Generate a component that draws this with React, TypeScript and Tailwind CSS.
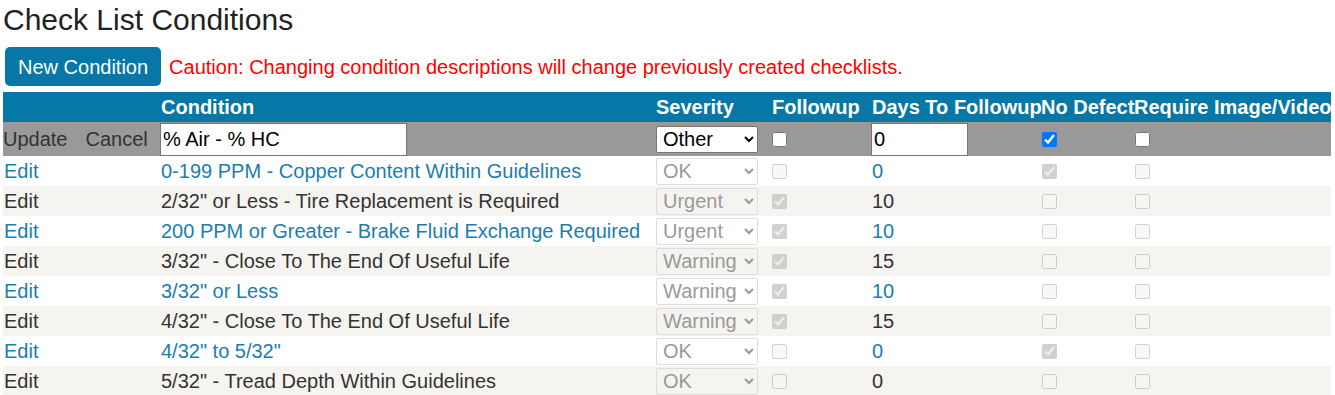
import React from 'react';

type Row = {
  desc: string;
  severity: string;
  followup: boolean;
  days: number;
  noDefect: boolean;
  requireMedia: boolean;
};

const rows: Row[] = [
  { desc: '0-199 PPM - Copper Content Within Guidelines', severity: 'OK', followup: false, days: 0, noDefect: true, requireMedia: false },
  { desc: '2/32" or Less - Tire Replacement is Required', severity: 'Urgent', followup: true, days: 10, noDefect: false, requireMedia: false },
  { desc: '200 PPM or Greater - Brake Fluid Exchange Required', severity: 'Urgent', followup: true, days: 10, noDefect: false, requireMedia: false },
  { desc: '3/32" - Close To The End Of Useful Life', severity: 'Warning', followup: true, days: 15, noDefect: false, requireMedia: false },
  { desc: '3/32" or Less', severity: 'Warning', followup: true, days: 10, noDefect: false, requireMedia: false },
  { desc: '4/32" - Close To The End Of Useful Life', severity: 'Warning', followup: true, days: 15, noDefect: false, requireMedia: false },
  { desc: '4/32" to 5/32"', severity: 'OK', followup: false, days: 0, noDefect: true, requireMedia: false },
  { desc: '5/32" - Tread Depth Within Guidelines', severity: 'OK', followup: false, days: 0, noDefect: false, requireMedia: false },
];

const severities = ['OK', 'Warning', 'Urgent', 'Other'];

const box = 'w-[15px] h-[15px] m-[3px] ml-px mb-[6px] align-middle';

export default function App() {
  return (
    <div className="px-[3px] pt-[3px] text-[20px] text-[#333] font-['Liberation_Sans',Arial,sans-serif]">
      <h2 className="text-[30px] leading-[34px] text-[#222]">Check List Conditions</h2>

      <div className="flex items-center gap-[8px] mt-[10px] pl-[2px]">
        <button className="h-[39px] px-[13px] rounded-[5px] bg-[#0677a6] text-white">New Condition</button>
        <span className="text-[#f00]">Caution: Changing condition descriptions will change previously created checklists.</span>
      </div>

      <table className="mt-[6px] w-[1328px] table-fixed border-collapse">
        <colgroup>
          <col className="w-[157px]" />
          <col className="w-[495px]" />
          <col className="w-[116px]" />
          <col className="w-[100px]" />
          <col className="w-[170px]" />
          <col className="w-[93px]" />
          <col className="w-[197px]" />
        </colgroup>
        <thead>
          <tr className="h-[30px] bg-[#0677a6] text-white font-bold text-left">
            <th></th>
            <th className="pl-px">Condition</th>
            <th className="pl-px">Severity</th>
            <th className="pl-px">Followup</th>
            <th className="pl-px whitespace-nowrap">Days To Followup</th>
            <th className="whitespace-nowrap">No Defect</th>
            <th className="whitespace-nowrap">Require Image/Video</th>
          </tr>
        </thead>
        <tbody>
          <tr className="h-[34px] bg-[#999999]">
            <td className="whitespace-nowrap">
              Update<span className="ml-[18px]">Cancel</span>
            </td>
            <td>
              <input
                defaultValue="% Air - % HC"
                className="w-[247px] h-[33px] px-[2px] bg-white text-black border border-[#767676]"
              />
            </td>
            <td className="pl-px">
              <select
                defaultValue="Other"
                className="w-[102px] h-[27px] bg-white text-black border border-[#767676] rounded-[2px] pl-[2px]"
              >
                {severities.map((s) => (
                  <option key={s}>{s}</option>
                ))}
              </select>
            </td>
            <td>
              <input type="checkbox" className={box} />
            </td>
            <td>
              <input
                defaultValue="0"
                className="w-[97px] h-[33px] px-[2px] bg-white text-black border border-[#767676]"
              />
            </td>
            <td>
              <input type="checkbox" defaultChecked className={box} />
            </td>
            <td>
              <input type="checkbox" className={box} />
            </td>
          </tr>
          {rows.map((r, i) => {
            const shaded = i % 2 === 1;
            const link = !shaded;
            return (
              <tr key={r.desc} className={shaded ? 'h-[30px] bg-[#f6f4f0]' : 'h-[30px] bg-white'}>
                <td className={link ? 'pl-px text-[#1b7db0]' : 'pl-px'}>Edit</td>
                <td className={link ? 'pl-px text-[#1b7db0] whitespace-nowrap' : 'pl-px whitespace-nowrap'}>{r.desc}</td>
                <td className="pl-px">
                  <select
                    disabled
                    defaultValue={r.severity}
                    className="w-[102px] h-[27px] text-[#999] border border-[#ddd] rounded-[2px] pl-[2px] bg-transparent"
                  >
                    {severities.map((s) => (
                      <option key={s}>{s}</option>
                    ))}
                  </select>
                </td>
                <td>
                  <input type="checkbox" disabled defaultChecked={r.followup} className={box} />
                </td>
                <td className={link ? 'pl-px text-[#1b7db0]' : 'pl-px'}>{r.days}</td>
                <td>
                  <input type="checkbox" disabled defaultChecked={r.noDefect} className={box} />
                </td>
                <td>
                  <input type="checkbox" disabled defaultChecked={r.requireMedia} className={box} />
                </td>
              </tr>
            );
          })}
        </tbody>
      </table>
    </div>
  );
}
